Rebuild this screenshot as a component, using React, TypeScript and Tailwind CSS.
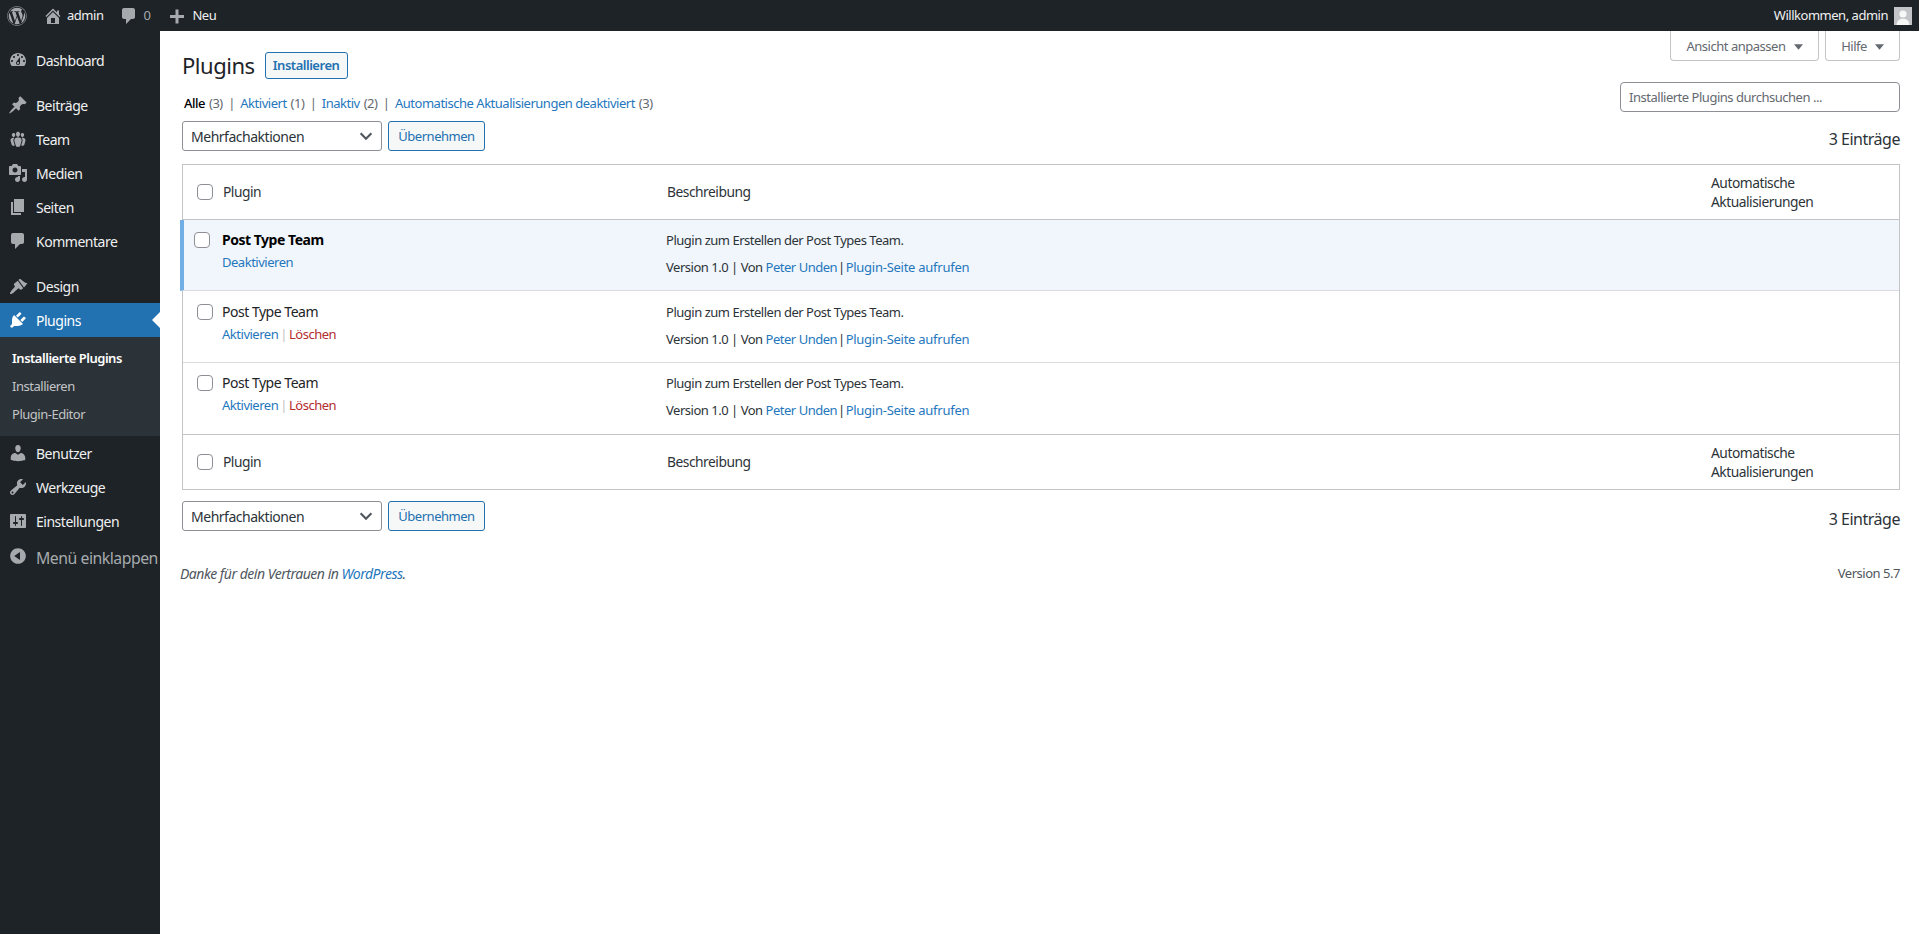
import React from "react";
import { FaWordpress } from "react-icons/fa";

const P = {
  dashboard: "M3.76 16h12.48c1.1-1.37 1.76-3.11 1.76-5 0-4.42-3.58-8-8-8s-8 3.58-8 8c0 1.89.66 3.63 1.76 5zM10 4c.55 0 1 .45 1 1s-.45 1-1 1-1-.45-1-1 .45-1 1-1zM6 6c.55 0 1 .45 1 1s-.45 1-1 1-1-.45-1-1 .45-1 1-1zm8 0c.55 0 1 .45 1 1s-.45 1-1 1-1-.45-1-1 .45-1 1-1zm-5.37 5.55L12 7v6c0 1.1-.9 2-2 2s-2-.9-2-2c0-.57.24-1.08.63-1.45zM4 10c.55 0 1 .45 1 1s-.45 1-1 1-1-.45-1-1 .45-1 1-1zm12 0c.55 0 1 .45 1 1s-.45 1-1 1-1-.45-1-1 .45-1 1-1zm-5 3c0-.55-.45-1-1-1s-1 .45-1 1 .45 1 1 1 1-.45 1-1z",
  pin: "M10.44 3.02l1.82-1.82 6.36 6.35-1.83 1.82c-1.05-.68-2.48-.57-3.41.36l-.75.75c-.92.93-1.04 2.35-.35 3.41l-1.83 1.82-2.41-2.41-2.8 2.79c-.42.42-3.38 2.71-3.8 2.29s1.86-3.39 2.28-3.81l2.79-2.79L4.1 9.36l1.83-1.82c1.05.69 2.48.57 3.4-.36l.75-.75c.93-.92 1.05-2.35.36-3.41z",
  groups: "M8.03 4.46c-.29 1.28.55 3.46 1.97 3.46 1.41 0 2.25-2.18 1.96-3.46-.22-.98-1.08-1.63-1.96-1.63-.89 0-1.74.65-1.97 1.63zm-4.13.9c-.25 1.08.47 2.93 1.67 2.93s1.92-1.85 1.67-2.93c-.19-.83-.92-1.39-1.67-1.39s-1.48.56-1.67 1.39zm8.86 0c-.25 1.08.47 2.93 1.66 2.93 1.2 0 1.92-1.85 1.67-2.93-.19-.83-.92-1.39-1.67-1.39-.74 0-1.47.56-1.66 1.39zm-.59 11.43l1.25-4.3C14.2 10 12.71 8.47 10 8.47c-2.72 0-4.21 1.53-3.44 4.02l1.26 4.3C8.05 17.51 9 18 10 18c.98 0 1.94-.49 2.17-1.21zm-6.1-7.63c-.49.67-.96 1.83-.42 3.59l1.12 3.79c-.34.2-.77.31-1.2.31-.85 0-1.65-.41-1.85-1.03l-1.07-3.65c-.65-2.11.61-3.4 2.92-3.4.27 0 .54.02.79.06-.1.1-.2.22-.29.33zm8.35-.39c2.31 0 3.58 1.29 2.92 3.4l-1.07 3.65c-.2.62-1 1.03-1.85 1.03-.43 0-.86-.11-1.2-.31l1.11-3.77c.55-1.78.08-2.94-.42-3.61-.08-.11-.18-.23-.28-.33.25-.04.51-.06.79-.06z",
  media: "M13 11V4c0-.55-.45-1-1-1h-1.67L9 1H5L3.67 3H2c-.55 0-1 .45-1 1v7c0 .55.45 1 1 1h10c.55 0 1-.45 1-1zM7 4.5c1.38 0 2.5 1.12 2.5 2.5S8.38 9.5 7 9.5 4.5 8.38 4.5 7 5.62 4.5 7 4.5zM14 6h5v10.5c0 1.38-1.12 2.5-2.5 2.5S14 17.88 14 16.5s1.12-2.5 2.5-2.5c.17 0 .34.02.5.05V9h-3V6zm-4 8.05V13h2v3.5c0 1.38-1.12 2.5-2.5 2.5S7 17.88 7 16.5 8.12 14 9.5 14c.17 0 .34.02.5.05z",
  page: "M6 15V2h10v13H6zm-1 1h8v2H3V5h2v11z",
  comment: "M5 2h9c1.1 0 2 .9 2 2v7c0 1.1-.9 2-2 2h-2l-5 5v-5H5c-1.1 0-2-.9-2-2V4c0-1.1.9-2 2-2z",
  design: "M10.500 4L11.500 3C13 2.500 14 4.500 15.500 5.500C17 6.500 18 7 19.300 7.500L16 11.500ZM9.800 4.800L15.200 12.200L13.500 13.500C12.700 14 12 13.600 11.500 13C11 12.400 10.200 12.400 9.600 12.900C7.500 14.700 4 18.600 2.300 18C1 17.200 4.600 13.400 6.500 11.300C7 10.700 7 10 6.400 9.400C5.800 8.800 5.800 8 6.300 7.500Z",
  plugin: "M13.11 4.36L9.87 7.6 8 5.73l3.24-3.24c.35-.34 1.05-.2 1.56.32.52.51.66 1.21.31 1.55zm-8 1.77l.91-1.12 9.01 9.01-1.19.84c-.71.71-2.63 1.16-3.82 1.16H6.14L4.9 17.26c-.59.59-1.54.59-2.12 0-.59-.58-.59-1.53 0-2.12l1.24-1.24v-3.88c0-1.13.4-3.19 1.09-3.89zm7.26 3.97l3.24-3.24c.34-.35 1.04-.21 1.55.31.52.51.66 1.21.31 1.55l-3.24 3.25z",
  users: "M10 9.25c-2.27 0-2.73-3.44-2.73-3.44C7 4.02 7.82 2 9.97 2c2.16 0 2.98 2.02 2.71 3.81 0 0-.41 3.44-2.68 3.44zm0 2.57L12.72 10c2.39 0 4.52 2.33 4.52 4.53v2.49s-3.65 1.13-7.24 1.13c-3.65 0-7.24-1.13-7.24-1.13v-2.49c0-2.25 1.94-4.48 4.47-4.48z",
  tools: "M16.68 9.77c-1.34 1.34-3.3 1.67-4.95.99l-5.41 6.52c-.99.99-2.59.99-3.58 0s-.99-2.59 0-3.57l6.52-5.42c-.68-1.65-.35-3.61.99-4.95 1.28-1.28 3.12-1.62 4.72-1.06l-2.89 2.89 2.82 2.82 2.86-2.87c.53 1.58.18 3.39-1.08 4.65zM3.81 16.21c.4.39 1.04.39 1.43 0 .4-.4.4-1.04 0-1.43-.39-.4-1.03-.4-1.43 0-.39.39-.39 1.03 0 1.43z",
  settings: "M18 16V4c0-.55-.45-1-1-1H3c-.55 0-1 .45-1 1v12c0 .55.45 1 1 1h14c.55 0 1-.45 1-1zM8 11h1c.55 0 1 .45 1 1s-.45 1-1 1H8v1.5c0 .28-.22.5-.5.5s-.5-.22-.5-.5V13H6c-.55 0-1-.45-1-1s.45-1 1-1h1V5.5c0-.28.22-.5.5-.5s.5.22.5.5V11zm5-2h-1c-.55 0-1-.45-1-1s.45-1 1-1h1V5.5c0-.28.22-.5.5-.5s.5.22.5.5V7h1c.55 0 1 .45 1 1s-.45 1-1 1h-1v5.5c0 .28-.22.5-.5.5s-.5-.22-.5-.5V9z",
  collapse: "M10 2.16c4.33 0 7.84 3.51 7.84 7.84s-3.51 7.84-7.84 7.84S2.16 14.33 2.16 10 5.71 2.16 10 2.16zm2 11.72V6.12L6.18 9.97z",
  home: "M16 8.5l1.53 1.53-1.06 1.06L10 4.62l-6.47 6.47-1.06-1.06L10 2.5l4 4v-2h2v4zm-6-2.46l6 5.99V18H4v-5.97zM12 17v-5H8v5h4z",
  plus: "M17 9v3h-5.500v5.500h-3V12H3V9h5.500V3.500h3V9z",
};

function Dash({ d, className }: { d: string; className?: string }) {
  return (
    <svg viewBox="0 0 20 20" className={className} fill="currentColor" aria-hidden="true">
      <path d={d} />
    </svg>
  );
}

function MenuItem({ icon, label, active }: { icon: string; label: string; active?: boolean }) {
  return (
    <a className={`relative flex h-[34px] items-center text-[14px] ${active ? "bg-[#2271b1] text-white" : "text-[#f0f0f1]"}`}>
      <span className="flex w-[36px] justify-center">
        <Dash d={icon} className={`h-5 w-5 ${active ? "text-white" : "text-[#a7aaad]"}`} />
      </span>
      <span>{label}</span>
      {active && (
        <span className="absolute right-0 top-[9px] h-0 w-0 border-y-[8px] border-r-[8px] border-y-transparent border-r-white" />
      )}
    </a>
  );
}

function Sidebar() {
  return (
    <aside className="w-[160px] shrink-0 bg-[#1d2327] pt-[12px]">
      <MenuItem icon={P.dashboard} label="Dashboard" />
      <div className="h-[11px]" />
      <MenuItem icon={P.pin} label="Beiträge" />
      <MenuItem icon={P.groups} label="Team" />
      <MenuItem icon={P.media} label="Medien" />
      <MenuItem icon={P.page} label="Seiten" />
      <MenuItem icon={P.comment} label="Kommentare" />
      <div className="h-[11px]" />
      <MenuItem icon={P.design} label="Design" />
      <MenuItem icon={P.plugin} label="Plugins" active />
      <div className="flex h-[99px] flex-col justify-center bg-[#2c3338] pl-[12px] text-[13px] text-[#c3c4c7]">
        <a className="flex h-[28px] items-center font-semibold text-white">Installierte Plugins</a>
        <a className="flex h-[28px] items-center">Installieren</a>
        <a className="flex h-[28px] items-center">Plugin-Editor</a>
      </div>
      <MenuItem icon={P.users} label="Benutzer" />
      <MenuItem icon={P.tools} label="Werkzeuge" />
      <MenuItem icon={P.settings} label="Einstellungen" />
      <div className="flex h-[38px] items-center whitespace-nowrap text-[15.8px] text-[#a7aaad]">
        <span className="flex w-[36px] justify-center">
          <Dash d={P.collapse} className="mb-[3px] h-5 w-5" />
        </span>
        <span className="mt-[3px]">Menü einklappen</span>
      </div>
    </aside>
  );
}

function TopBar() {
  return (
    <header className="flex h-[31px] shrink-0 items-center justify-between bg-[#1d2327] text-[13px] text-[#f0f0f1]">
      <div className="flex items-center">
        <FaWordpress className="ml-[7px] h-[20px] w-[20px] text-[#a7aaad]" />
        <Dash d={P.home} className="ml-[16px] h-[20px] w-[20px] text-[#a7aaad]" />
        <span className="ml-[4px]">admin</span>
        <Dash d={P.comment} className="ml-[16px] h-[20px] w-[20px] text-[#a7aaad]" />
        <span className="ml-[4px] text-[#a7aaad]">0</span>
        <Dash d={P.plus} className="ml-[17px] h-[20px] w-[20px] text-[#a7aaad]" />
        <span className="ml-[5px]">Neu</span>
      </div>
      <div className="mr-[7px] flex items-center gap-[6px]">
        <span>Willkommen, admin</span>
        <span className="flex h-[18px] w-[18px] items-end justify-center overflow-hidden bg-[#c3c4c7]">
          <svg viewBox="0 0 18 18" className="h-[18px] w-[18px]" fill="#f6f7f7">
            <circle cx="9" cy="7" r="3.6" />
            <path d="M2.5 18c.4-4.4 3-6.2 6.5-6.2s6.100 1.800 6.500 6.200z" />
          </svg>
        </span>
      </div>
    </header>
  );
}

function Checkbox({ className }: { className?: string }) {
  return (
    <input
      type="checkbox"
      readOnly
      className={`h-4 w-4 shrink-0 appearance-none rounded-[4px] border border-[#8c8f94] bg-white ${className ?? ""}`}
    />
  );
}

function Bulk() {
  return (
    <div className="flex items-center gap-[6px]">
      <div className="flex h-[30px] w-[200px] items-center justify-between rounded-[3px] border border-[#8c8f94] bg-white pl-[8px] pr-[6px] text-[14px] text-[#2c3338]">
        <span>Mehrfachaktionen</span>
        <svg viewBox="0 0 20 20" className="h-[18px] w-[18px]" fill="none" stroke="#50575e" strokeWidth="2.4">
          <path d="M4 7l6 6 6-6" />
        </svg>
      </div>
      <button className="flex h-[30px] w-[97px] items-center justify-center rounded-[3px] border border-[#2271b1] bg-[#f6f7f7] pt-[1px] text-[13px] text-[#2271b1]">
        Übernehmen
      </button>
    </div>
  );
}

function HeadRow({ border, h }: { border: string; h: string }) {
  return (
    <div className={`grid grid-cols-[484px_1044px_1fr] items-center text-[13.8px] text-[#2c3338] ${h} ${border}`}>
      <div className="flex items-center pl-[14px]">
        <Checkbox />
        <span className="ml-[10px]">Plugin</span>
      </div>
      <div>Beschreibung</div>
      <div className="leading-[19.5px]">
        Automatische
        <br />
        Aktualisierungen
      </div>
    </div>
  );
}

function Desc({ pt }: { pt: string }) {
  return (
    <div className={`-ml-[1px] text-[13px] text-[#2c3338] ${pt}`}>
      <div className="mt-[1px] leading-[19.5px]">Plugin zum Erstellen der Post Types Team.</div>
      <div className="mt-[7px] leading-[19.5px]">
        Version 1.0 | Von <a className="text-[#2577bd]">Peter Unden</a>
        <span className="-mx-[2px]"> | </span>
        <a className="tracking-[-0.02em] text-[#2577bd]">Plugin-Seite aufrufen</a>
      </div>
    </div>
  );
}

function ActiveRow() {
  return (
    <div className="-ml-[3px] grid h-[71px] grid-cols-[483px_1044px_1fr] border-b border-l-4 border-b-[#dcdcde] border-l-[#72aee6] bg-[#f0f6fc] text-[13px]">
      <div className="flex pl-[10px] pt-[10px]">
        <Checkbox className="mt-[2px]" />
        <div className="ml-[12px]">
          <div className="text-[14px] font-bold leading-[19.5px] text-black">Post Type Team</div>
          <a className="mt-[3px] block leading-[19.5px] text-[#2577bd]">Deaktivieren</a>
        </div>
      </div>
      <Desc pt="pt-[10px]" />
      <div />
    </div>
  );
}

function InactiveRow({ last, pt }: { last?: boolean; pt: string }) {
  return (
    <div className={`grid h-[72px] grid-cols-[484px_1044px_1fr] border-b text-[13px] ${last ? "border-b-[#c3c4c7]" : "border-b-[#dcdcde]"}`}>
      <div className={`flex pl-[14px] ${pt}`}>
        <Checkbox className="mt-[2px]" />
        <div className="ml-[9px]">
          <div className="text-[14px] leading-[19.5px] text-[#1d2327]">Post Type Team</div>
          <div className="mt-[3px] leading-[19.5px]">
            <a className="text-[#2577bd]">Aktivieren</a>
            <span className="mx-[2px] text-[#c3c4c7]">|</span>
            <a className="text-[#b32d2e]">Löschen</a>
          </div>
        </div>
      </div>
      <Desc pt={pt} />
      <div />
    </div>
  );
}

function TabButton({ label, w }: { label: string; w: string }) {
  return (
    <div className={`flex h-[30px] items-center justify-center gap-[8px] rounded-b-[4px] border border-t-0 border-[#c3c4c7] bg-white pt-[2px] text-[13px] text-[#646970] ${w}`}>
      <span>{label}</span>
      <svg viewBox="0 0 10 6" className="h-[6px] w-[9px]" fill="#646970">
        <path d="M0 0h10L5 6z" />
      </svg>
    </div>
  );
}

function Filters() {
  const link = "text-[#2577bd]";
  const count = "ml-[1px] text-[#646970]";
  const sep = "mx-[2.5px] text-[#646970]";
  return (
    <div className="mt-[13px] pl-[2px] text-[13px] leading-[20px]">
      <span className="font-medium text-black">Alle</span> <span className={count}>(3)</span>
      <span className={sep}> | </span>
      <a className={link}>Aktiviert</a> <span className={count}>(1)</span>
      <span className={sep}> | </span>
      <a className={link}>Inaktiv</a> <span className={count}>(2)</span>
      <span className={sep}> | </span>
      <a className={link}>Automatische Aktualisierungen deaktiviert</a> <span className={count}>(3)</span>
    </div>
  );
}

export default function App() {
  return (
    <div className="flex h-[934px] flex-col overflow-hidden bg-white font-['Noto_Sans',sans-serif] tracking-[-0.03em]">
      <TopBar />
      <div className="flex min-h-0 flex-1">
        <Sidebar />
        <main className="min-w-0 flex-1 pl-[22px] pr-[19px]">
          <div className="flex items-start justify-between">
            <div className="pt-[20px]">
              <div className="flex items-center gap-[10px]">
                <h1 className="text-[22px] leading-[29px] text-[#1d2327]">Plugins</h1>
                <button className="flex h-[27px] w-[83px] items-center justify-center rounded-[3px] border border-[#2271b1] bg-[#f6f7f7] pt-[1px] text-[13px] font-semibold text-[#2271b1]">
                  Installieren
                </button>
              </div>
              <Filters />
            </div>
            <div className="flex flex-col items-end">
              <div className="flex gap-[6px]">
                <TabButton label="Ansicht anpassen" w="w-[149px]" />
                <TabButton label="Hilfe" w="w-[75px]" />
              </div>
              <input
                readOnly
                placeholder="Installierte Plugins durchsuchen ..."
                className="mt-[21px] h-[30px] w-[280px] rounded-[4px] border border-[#8c8f94] bg-white px-[8px] text-[13px] placeholder:text-[#646970]"
              />
            </div>
          </div>
          <div className="mt-[8px] flex items-center justify-between">
            <Bulk />
            <span className="mt-[5px] text-[16px] text-[#2c3338]">3 Einträge</span>
          </div>
          <div className="mt-[13px] border border-[#c3c4c7]">
            <HeadRow border="border-b border-b-[#c3c4c7]" h="h-[55px]" />
            <ActiveRow />
            <InactiveRow pt="pt-[11px]" />
            <InactiveRow last pt="pt-[10px]" />
            <HeadRow border="" h="h-[54px]" />
          </div>
          <div className="mt-[11px] flex items-center justify-between">
            <Bulk />
            <span className="mt-[5px] text-[16px] text-[#2c3338]">3 Einträge</span>
          </div>
          <div className="mt-[33px] -ml-[2px] flex items-center justify-between text-[#50575e]">
            <span className="text-[14px] italic leading-[20px]">
              Danke für dein Vertrauen in <a className="text-[#2577bd]">WordPress</a>.
            </span>
            <span className="text-[13px]">Version 5.7</span>
          </div>
        </main>
      </div>
    </div>
  );
}
